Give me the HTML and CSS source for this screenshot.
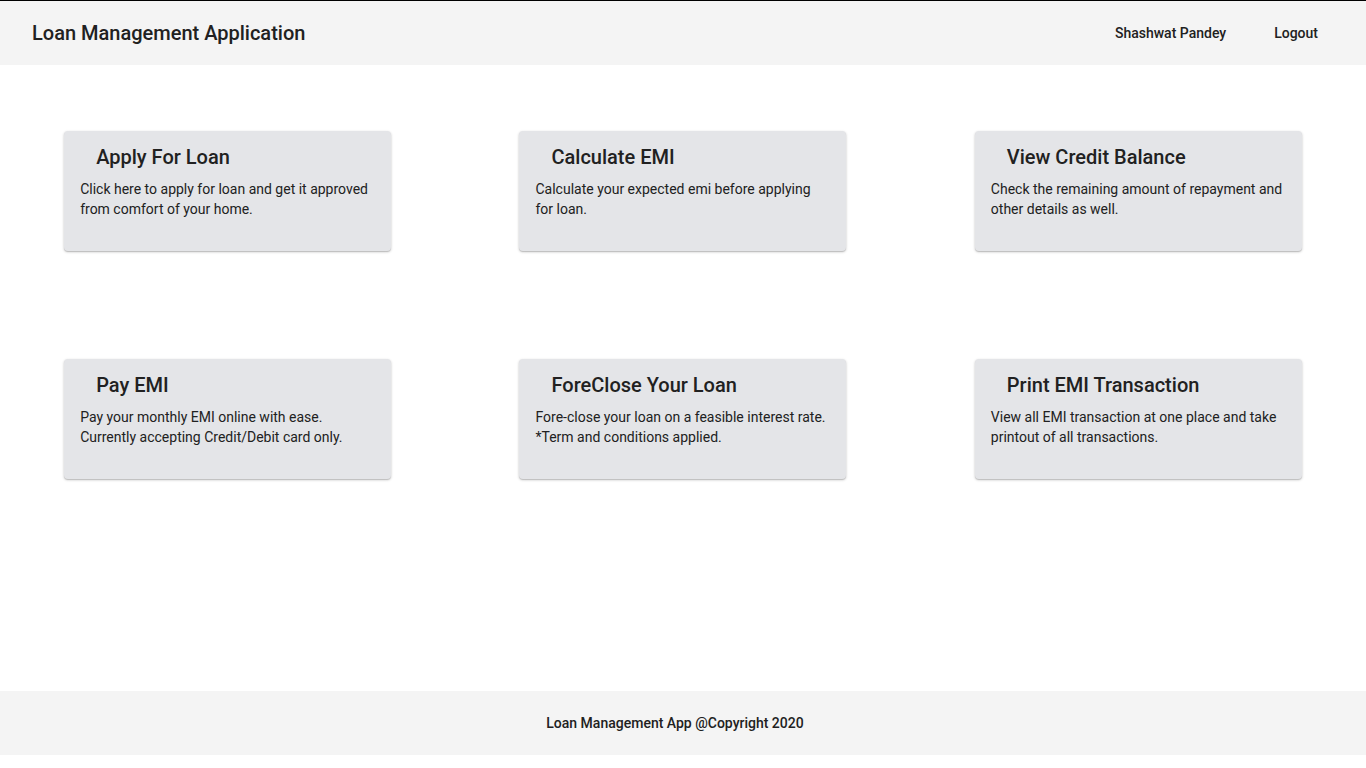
FILE: index.html
```html
<!DOCTYPE html>
<html>
<head>
<meta charset="utf-8">
<link rel="stylesheet" href="styles.css">
</head>
<body>
<header class="topbar">
  <div class="brand">Loan Management Application</div>
  <nav class="nav">
    <a class="nav-link">Shashwat Pandey</a>
    <a class="nav-link">Logout</a>
  </nav>
</header>
<main class="content">
  <div class="grid">
    <div class="cell"><div class="card"><h2 class="card-title">Apply For Loan</h2><p class="card-text">Click here to apply for loan and get it approved from comfort of your home.</p></div></div>
    <div class="cell"><div class="card"><h2 class="card-title">Calculate EMI</h2><p class="card-text">Calculate your expected emi before applying for loan.</p></div></div>
    <div class="cell"><div class="card"><h2 class="card-title">View Credit Balance</h2><p class="card-text">Check the remaining amount of repayment and other details as well.</p></div></div>
    <div class="cell"><div class="card"><h2 class="card-title">Pay EMI</h2><p class="card-text">Pay your monthly EMI online with ease. Currently accepting Credit/Debit card only.</p></div></div>
    <div class="cell"><div class="card"><h2 class="card-title">ForeClose Your Loan</h2><p class="card-text">Fore-close your loan on a feasible interest rate. *Term and conditions applied.</p></div></div>
    <div class="cell"><div class="card"><h2 class="card-title">Print EMI Transaction</h2><p class="card-text">View all EMI transaction at one place and take printout of all transactions.</p></div></div>
  </div>
</main>
<footer class="footer">Loan Management App @Copyright 2020</footer>
</body>
</html>
```
FILE: styles.css
```css
* { box-sizing: border-box; }
html, body { margin: 0; padding: 0; }
body {
  font-family: Roboto, "Liberation Sans", sans-serif;
  color: #212121;
  background: #fff;
  border-top: 1px solid #000;
}
.topbar {
  height: 64px;
  background: #f4f4f4;
  display: flex;
  align-items: center;
  justify-content: space-between;
  padding: 0 32px;
}
.brand {
  font-size: 20px;
  font-weight: 500;
  color: #212121;
}
.nav {
  display: flex;
  gap: 48px;
  padding-right: 16px;
}
.nav-link {
  font-size: 14px;
  font-weight: 500;
  color: #212121;
}
.content {
  height: 626px;
  padding-top: 66px;
}
.grid {
  display: grid;
  grid-template-columns: repeat(3, 1fr);
  row-gap: 108px;
}
.cell {
  display: flex;
  justify-content: center;
}
.card {
  width: 327px;
  height: 120px;
  background: #e4e5e8;
  border-radius: 4px;
  box-shadow: 0 1px 3px rgba(0,0,0,0.2), 0 1px 1px rgba(0,0,0,0.14);
  padding: 14px 16px 0 16px;
}
.card-title {
  margin: 0 0 10px 16px;
  font-size: 20px;
  line-height: 24px;
  font-weight: 500;
}
.card-text {
  margin: 0;
  font-size: 14px;
  line-height: 20px;
}
.footer {
  height: 64px;
  background: #f4f4f4;
  display: flex;
  align-items: center;
  justify-content: center;
  padding-right: 16px;
  font-size: 14px;
  font-weight: 500;
}
```
